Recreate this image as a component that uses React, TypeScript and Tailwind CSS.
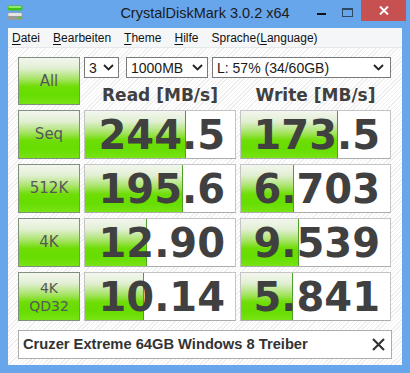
import React from "react";

interface IResult {
  label: string[];
  read: string;
  readBar: number;
  write: string;
  writeBar: number;
}

const results: IResult[] = [
  { label: ["Seq"], read: "244.5", readBar: 101, write: "173.5", writeBar: 97 },
  { label: ["512K"], read: "195.6", readBar: 98, write: "6.703", writeBar: 53 },
  { label: ["4K"], read: "12.90", readBar: 62, write: "9.539", writeBar: 58 },
  { label: ["4K", "QD32"], read: "10.14", readBar: 59, write: "5.841", writeBar: 52 },
];

const menu = [
  { key: "D", rest: "atei" },
  { key: "B", rest: "earbeiten" },
  { key: "T", rest: "heme" },
  { key: "H", rest: "ilfe" },
];

const GREEN =
  "bg-[linear-gradient(to_bottom,#f3f6ef_0%,#e2efd3_22%,#a9e46a_45%,#6fdd06_62%,#66dd00_80%,#78e314_100%)]";

const Chevron = () => (
  <svg width="11" height="7" viewBox="0 0 11 7" className="shrink-0">
    <path d="M1 1l4.5 4.5L10 1" fill="none" stroke="#222" strokeWidth="1.8" />
  </svg>
);

const Select = ({ text, className }: { text: string; className: string }) => (
  <div
    className={`flex items-center justify-between h-full bg-white border border-[#7a7a7a] pl-[4px] pr-[4px] text-[14px] text-[#1a1a1a] font-['Liberation_Sans',sans-serif] ${className}`}
  >
    <span className="leading-none">{text}</span>
    <Chevron />
  </div>
);

const TestButton = ({ lines, className = "" }: { lines: string[]; className?: string }) => (
  <div
    className={`flex flex-col items-center justify-center border border-[#7f917c] text-[#585858] font-['DejaVu_Sans',sans-serif] ${GREEN} ${className}`}
  >
    {lines.map((l) => (
      <span key={l} className={lines.length > 1 ? "text-[14px] leading-[18px]" : "text-[15px] leading-none"}>
        {l}
      </span>
    ))}
  </div>
);

const Cell = ({ value, bar }: { value: string; bar: number }) => (
  <div className="relative bg-white border border-[#c4c4c4] border-b-[#adadad] overflow-hidden">
    <div
      className={`absolute left-0 top-0 bottom-0 border-r border-[#4f9f2c] ${GREEN}`}
      style={{ width: bar }}
    />
    <div className="relative flex items-center justify-end h-full pr-[10px] text-[40px] leading-none font-bold text-[#404040] font-['DejaVu_Sans',sans-serif]">
      {value}
    </div>
  </div>
);

export default function App() {
  return (
    <div className="w-[410px] h-[373px] bg-[#68a6ec] flex flex-col">
      {/* title bar */}
      <div className="h-[28px] flex shrink-0">
        <div className="w-[101px] pl-[7px] pt-[5px]">
          <svg width="16" height="16" viewBox="0 0 16 16">
            <rect x="0.5" y="0.5" width="15" height="5" rx="2" fill="#3cc21a" />
            <rect x="1.5" y="1" width="13" height="2" rx="1" fill="#8fe86a" />
            <rect x="0.5" y="7.5" width="15" height="7.5" rx="2" fill="#9a9a9a" />
            <rect x="1" y="8" width="14" height="3" rx="1.5" fill="#e4e4e4" />
            <rect x="11" y="12" width="3" height="1.5" fill="#3cd01a" />
          </svg>
        </div>
        <div className="flex-1 flex items-center justify-center text-[14.5px] text-[#1b1b1b] font-['Liberation_Sans',sans-serif] pb-[1px]">
          CrystalDiskMark 3.0.2 x64
        </div>
        <div className="w-[101px] flex items-start">
          <div className="w-[25px] h-[21px] flex justify-center pt-[13px]">
            <div className="w-[9px] h-[2px] bg-[#111]" />
          </div>
          <div className="w-[27px] h-[21px] flex justify-center pt-[8px]">
            <div className="w-[11px] h-[9px] border border-t-2 border-[#2d4866]" />
          </div>
          <div className="w-[45px] h-[21px] bg-[#c75050] flex items-center justify-center">
            <svg width="10" height="9" viewBox="0 0 10 9">
              <path d="M1 0.5l8 8M9 0.5l-8 8" stroke="#fff" strokeWidth="2" />
            </svg>
          </div>
        </div>
      </div>

      {/* client */}
      <div className="flex-1 mx-[8px] mb-[8px] flex flex-col bg-white">
        <div className="h-[20px] shrink-0 flex items-center gap-[13px] pl-[4px] bg-[#f5f6f7] border-b border-[#e6e7e8] text-[12px] text-[#111] font-['Liberation_Sans',sans-serif]">
          {menu.map((m) => (
            <span key={m.key}>
              <span className="underline underline-offset-2">{m.key}</span>
              {m.rest}
            </span>
          ))}
          <span>
            Sprache(<span className="underline underline-offset-2">L</span>anguage)
          </span>
        </div>

        <div className="flex-1 px-[10px] pt-[9px] bg-[repeating-linear-gradient(135deg,#ffffff_0px,#ffffff_2px,#eeeeee_2px,#eeeeee_3px)]">
          <div className="grid grid-cols-[62px_152px_151px] grid-rows-[21px_22px_49px_49px_49px_49px] gap-x-[4px] gap-y-[5px]">
            <TestButton lines={["All"]} className="row-span-2" />
            <div className="col-span-2 flex">
              <Select text="3" className="w-[35px]" />
              <Select text="1000MB" className="w-[82px] ml-[7px]" />
              <Select text="L: 57% (34/60GB)" className="w-[179px] ml-[4px] pr-[6px]" />
            </div>
            {["Read [MB/s]", "Write [MB/s]"].map((h) => (
              <div
                key={h}
                className="flex items-center justify-center text-[17px] font-bold text-[#404040] font-['DejaVu_Sans',sans-serif] leading-none pt-[2px]"
              >
                {h}
              </div>
            ))}
            {results.map((r) => (
              <React.Fragment key={r.read}>
                <TestButton lines={r.label} />
                <Cell value={r.read} bar={r.readBar} />
                <Cell value={r.write} bar={r.writeBar} />
              </React.Fragment>
            ))}
          </div>

          <div className="mt-[9px] h-[29px] flex items-center justify-between bg-white border border-[#adadad] pl-[4px] pr-[6px]">
            <span className="text-[14.7px] font-bold text-[#333] font-['Liberation_Sans',sans-serif]">
              Cruzer Extreme 64GB Windows 8 Treiber
            </span>
            <svg width="13" height="13" viewBox="0 0 13 13">
              <path d="M1 1l11 11M12 1L1 12" stroke="#333" strokeWidth="2.2" />
            </svg>
          </div>
        </div>
      </div>
    </div>
  );
}
